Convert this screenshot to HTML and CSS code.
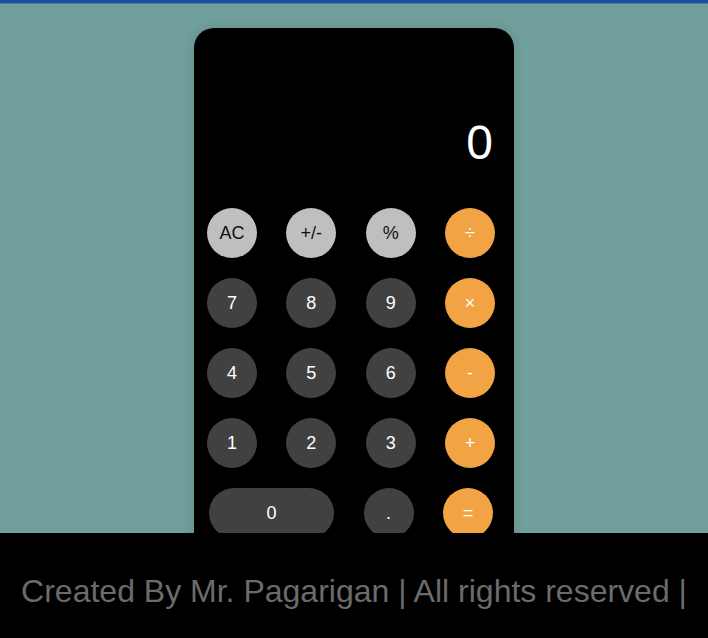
FILE: index.html
```html
<!DOCTYPE html>
<html>
<head>
<meta charset="utf-8">
<link rel="stylesheet" href="styles.css">
</head>
<body>
<div class="topbar"></div>
<main class="stage">
  <div class="calc">
    <div class="display">0</div>
    <div class="keys">
      <div class="row">
        <button class="key light">AC</button>
        <button class="key light">+/-</button>
        <button class="key light">%</button>
        <button class="key op">÷</button>
      </div>
      <div class="row">
        <button class="key dark">7</button>
        <button class="key dark">8</button>
        <button class="key dark">9</button>
        <button class="key op">×</button>
      </div>
      <div class="row">
        <button class="key dark">4</button>
        <button class="key dark">5</button>
        <button class="key dark">6</button>
        <button class="key op">-</button>
      </div>
      <div class="row">
        <button class="key dark">1</button>
        <button class="key dark">2</button>
        <button class="key dark">3</button>
        <button class="key op">+</button>
      </div>
      <div class="row last">
        <button class="key dark wide">0</button>
        <button class="key dark">.</button>
        <button class="key op">=</button>
      </div>
    </div>
  </div>
</main>
<footer class="footer">Created By Mr. Pagarigan | All rights reserved |</footer>
</body>
</html>
```
FILE: styles.css
```css
html, body {
  margin: 0;
  padding: 0;
}
body {
  background: #719f9b;
  font-family: "Liberation Sans", Arial, sans-serif;
  height: 638px;
  overflow: hidden;
}
.topbar {
  height: 4px;
  background: #1a509b;
  border-bottom: 1px solid #4a78b0;
  box-sizing: border-box;
}
.stage {
  display: flex;
  justify-content: center;
  padding-top: 24px;
}
.calc {
  width: 320px;
  background: #000;
  border-radius: 20px;
  box-shadow: 0 0 12px rgba(0,0,0,0.12);
  padding-bottom: 20px;
}
.display {
  color: #fff;
  font-size: 48px;
  line-height: 55px;
  text-align: right;
  padding: 87px 21px 38px;
}
.keys {
  display: flex;
  flex-direction: column;
  gap: 20px;
}
.row {
  display: flex;
  justify-content: space-between;
  padding: 0 19px 0 13px;
}
.row.last {
  padding: 0 21px 0 15px;
}
.key {
  width: 50px;
  height: 50px;
  border: none;
  border-radius: 25px;
  font-family: "Liberation Sans", Arial, sans-serif;
  font-size: 18px;
  padding: 0;
  color: #fff;
}
.key.light {
  background: #bfbfbf;
  color: #111;
}
.key.dark {
  background: #414141;
}
.key.op {
  background: #f2a444;
}
.key.wide {
  width: 125px;
}
.footer {
  position: fixed;
  left: 0;
  right: 0;
  bottom: 0;
  height: 105px;
  box-sizing: border-box;
  background: #000;
  color: #6b6b6b;
  font-size: 32px;
  line-height: 37px;
  text-align: center;
  padding-top: 40px;
  white-space: nowrap;
}
```
